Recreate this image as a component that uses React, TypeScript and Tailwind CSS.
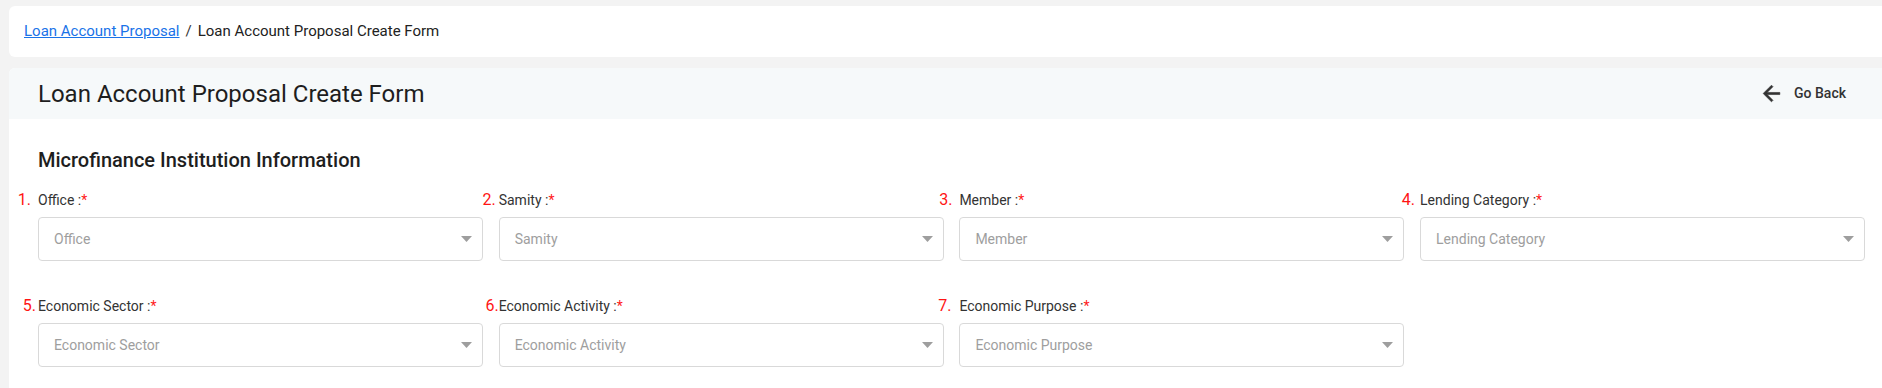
import React from "react";

const fields = [
  { n: "1.", label: "Office", gap: "pr-[7px]" },
  { n: "2.", label: "Samity", gap: "pr-[3px]" },
  { n: "3.", label: "Member", gap: "pr-[7px]" },
  { n: "4.", label: "Lending Category", gap: "pr-[5px]" },
  { n: "5.", label: "Economic Sector", gap: "pr-[2px]" },
  { n: "6.", label: "Economic Activity", gap: "pr-[0px]" },
  { n: "7.", label: "Economic Purpose", gap: "pr-[8px]" },
];

function Field({ n, label, gap }: { n: string; label: string; gap: string }) {
  return (
    <div className="flex flex-col">
      <div className="flex items-center h-[20px]">
        <span className={`-ml-[30px] w-[30px] text-right text-[16px] leading-[20px] text-[#ff1414] ${gap}`}>{n}</span>
        <span className="text-[14px] leading-[20px] text-[#333333]">
          {label} :<span className="text-[#ff1a1a]">*</span>
        </span>
      </div>
      <div className="mt-[7px] h-[44px] rounded-[4px] border border-[#d9d9d9] bg-white flex items-center justify-between pl-[15px] pr-[10px]">
        <span className="text-[14px] text-[#9e9e9e]">{label}</span>
        <svg width="11" height="6" viewBox="0 0 11 6">
          <path d="M0 0 L11 0 L5.5 6 Z" fill="#9e9e9e" />
        </svg>
      </div>
    </div>
  );
}

export default function App() {
  return (
    <div className="min-h-[388px] bg-[#f3f3f3] pl-[9px] pt-[6px] overflow-hidden" style={{ fontFamily: "Roboto, 'Noto Sans', sans-serif" }}>
      <div className="h-[51px] bg-white rounded-l-[6px] flex items-center pl-[15px] text-[15px]">
        <a href="#" className="text-[#1a73e8] underline">Loan Account Proposal</a>
        <span className="text-[#333333] mx-[6px]">/</span>
        <span className="text-[#222222]">Loan Account Proposal Create Form</span>
      </div>
      <div className="mt-[11px] bg-white rounded-tl-[6px] overflow-hidden">
        <div className="h-[51px] bg-[#f6f9fa] flex items-center justify-between pl-[29px] pr-[36px]">
          <h1 className="text-[24px] text-[#1e1e1e] leading-[30px]">Loan Account Proposal Create Form</h1>
          <button className="flex items-center gap-[10px] text-[14px] font-medium text-[#333333]">
            <svg width="25" height="25" viewBox="0 0 24 24">
              <path d="M20 11H7.83l5.59-5.59L12 4l-8 8 8 8 1.41-1.41L7.83 13H20v-2z" fill="#333333" stroke="#333333" strokeWidth="0.6" strokeLinejoin="round" />
            </svg>
            Go Back
          </button>
        </div>
        <div className="pl-[29px] pt-[29px] pb-[30px]">
          <h2 className="text-[20px] font-medium leading-[24px] text-[#1e1e1e]">Microfinance Institution Information</h2>
          <div className="mt-[18px] grid grid-cols-[repeat(4,445px)] gap-x-[15.7px] gap-y-[35px]">
            {fields.map((f) => (
              <Field key={f.n} {...f} />
            ))}
          </div>
        </div>
      </div>
    </div>
  );
}
